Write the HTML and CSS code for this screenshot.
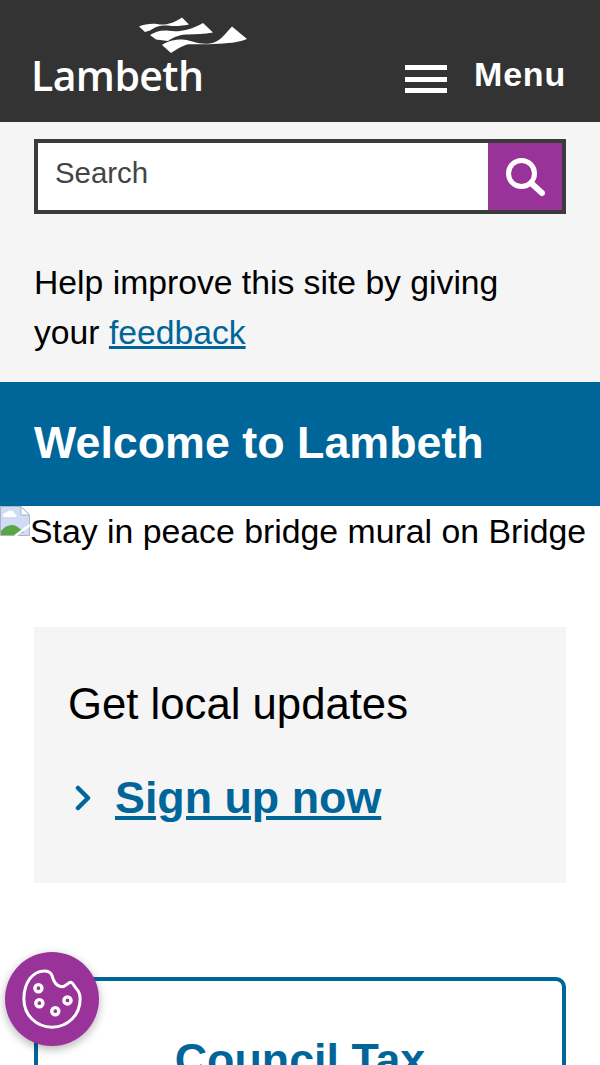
FILE: index.html
```html
<!DOCTYPE html>
<html lang="en">
<head>
<meta charset="utf-8">
<title>Lambeth</title>
<link rel="stylesheet" href="styles.css">
</head>
<body>
<header class="site-header">
  <a class="logo" href="#">
    <svg class="logo-mark" viewBox="0 0 110 37" aria-hidden="true">
      <path d="M1 9.500C6 7.500 12 6.500 19 7C27 8.500 34 7 44 .5L51 7.500C43 9 37 9.500 30 8.500C22 8 17 10 12 13.500L7 15Z"/>
      <path d="M12 18C17 15 22 13 29 13.500C38 15 49 15 65 6L75 15.500C66 17 58 17 50 17.500C43 17.500 37 19 30 24L18 22.500Z"/>
      <path d="M24 28C30 24 36 22.500 44 22.500C53 23 60 28 72 26.500C82 25 87 17 94 9.500L109 22C100 25.500 90 26.500 75 27C64 27.500 56 27 49 27.500C44 29 39 32 33 36Z"/>
    </svg>
    <span class="logo-text">Lambeth</span>
  </a>
  <button class="menu" type="button">
    <span class="burger"><i></i><i></i><i></i></span>
    <span class="menu-label">Menu</span>
  </button>
</header>

<section class="top">
  <form class="search">
    <span class="search-field">Search</span>
    <span class="search-btn">
      <svg viewBox="0 0 40 40" width="40" height="40" aria-hidden="true">
        <circle cx="16.500" cy="16.500" r="13" fill="none" stroke="#fff" stroke-width="5"/>
        <path d="M26 26L37 36" stroke="#fff" stroke-width="6" stroke-linecap="round"/>
      </svg>
    </span>
  </form>
  <p class="feedback">Help improve this site by giving your <a href="#">feedback</a></p>
</section>

<h1 class="welcome">Welcome to Lambeth</h1>

<div class="hero-alt">
  <svg class="broken" viewBox="0 0 30 30" aria-hidden="true">
    <path d="M.5 .5H21L29.500 9V29.500H.5Z" fill="#cfdcf3" stroke="#aab4c8"/>
    <path d="M21 .5V9H29.500Z" fill="#fff" stroke="#aab4c8"/>
    <path d="M3 11C2 8 5 6 7 6.500C9 3.500 14 4 15 8C17 8 17 11 15 11Z" fill="#fff"/>
    <path d="M1 29V25C4 21 8 19 12 19C17 19 20 23 24 26L18 29Z" fill="#5aa545"/>
    <path d="M15 30L30 19" stroke="#fff" stroke-width="2.500"/>
  </svg>
  <span>Stay in peace bridge mural on Bridge</span>
</div>

<section class="updates">
  <h2>Get local updates</h2>
  <p class="signup">
    <svg class="chev" viewBox="0 0 16 26" aria-hidden="true"><path d="M3 3L13 13L3 23" fill="none" stroke="#006699" stroke-width="4.500" stroke-linecap="round" stroke-linejoin="round"/></svg>
    <a href="#">Sign up now</a>
  </p>
</section>

<a class="card" href="#">Council Tax</a>

<button class="cookie" type="button" aria-label="Cookie settings">
  <svg viewBox="0 0 64 64" width="60" height="60" aria-hidden="true">
    <path d="M24 2C29 2 31 4 32 7C33 11 36 18 42 19C47 19 49 14 52 14C55 15 55 18 58 21C61 24 62 27 62 32C62 49 49 62 32 62C15 62 2 49 2 32C2 15 11 2 24 2Z" fill="none" stroke="#fff" stroke-width="3.200"/>
    <g fill="none" stroke="#fff" stroke-width="3.600">
      <circle cx="17.500" cy="20.500" r="3.800"/>
      <circle cx="18.500" cy="36.500" r="3.800"/>
      <circle cx="35.500" cy="45" r="3.800"/>
      <circle cx="48.500" cy="33.500" r="3.800"/>
    </g>
  </svg>
</button>
</body>
</html>
```

FILE: styles.css
```css
* { box-sizing: border-box; }

html, body {
  margin: 0;
  height: 1065px;
  overflow: hidden;
  background: #fff;
  font-family: "Liberation Sans", Arial, sans-serif;
  color: #000;
}

.site-header {
  height: 122px;
  background: #333;
  display: flex;
  justify-content: space-between;
  padding: 17px 34px 0 33px;
}

.logo {
  position: relative;
  display: block;
  width: 215px;
  color: #fff;
  text-decoration: none;
}

.logo-mark {
  position: absolute;
  left: 105px;
  top: 0;
  width: 110px;
  height: 37px;
  fill: #fff;
}

.logo-text {
  position: absolute;
  left: -2px;
  top: 30px;
  font-family: "Open Sans", sans-serif;
  font-size: 41px;
  line-height: 56px;
  font-weight: 600;
  letter-spacing: -.6px;
}

.menu {
  display: flex;
  align-items: flex-start;
  gap: 27px;
  padding: 0;
  border: 0;
  background: none;
  color: #fff;
  font: inherit;
  height: 78px;
}

.burger {
  display: flex;
  flex-direction: column;
  gap: 6.500px;
  width: 42px;
  margin-top: 48px;
}

.burger i {
  display: block;
  height: 5px;
  background: #fff;
}

.menu-label {
  font-size: 34px;
  line-height: 40px;
  font-weight: 700;
  margin-top: 37px;
  letter-spacing: .8px;
}

.top {
  background: #f5f5f5;
  height: 260px;
  padding: 17px 34px 0;
}

.search {
  display: flex;
  height: 75px;
  border: 4px solid #3b3b3b;
  background: #fff;
}

.search-field {
  flex: 1;
  padding-left: 17px;
  font-size: 29.400px;
  line-height: 60px;
  color: #444;
}

.search-btn {
  width: 74px;
  background: #993399;
  display: flex;
  align-items: center;
  justify-content: center;
}

.feedback {
  margin: 43px 0 0;
  font-size: 33.700px;
  line-height: 50px;
}

.feedback a {
  color: #006699;
}

.welcome {
  margin: 0;
  height: 124px;
  background: #006699;
  color: #fff;
  padding: 0 34px;
  font-size: 44.800px;
  line-height: 120px;
  font-weight: 700;
}

.hero-alt {
  display: flex;
  height: 121px;
  font-size: 33.800px;
  line-height: 50px;
  white-space: nowrap;
  overflow: hidden;
}

.broken {
  flex: none;
  width: 30px;
  height: 30px;
}

.updates {
  margin: 0 34px;
  height: 256px;
  background: #f5f5f5;
  padding: 49px 34px 0;
}

.updates h2 {
  margin: 0;
  font-size: 43.700px;
  line-height: 56px;
  font-weight: 400;
}

.signup {
  display: flex;
  align-items: center;
  gap: 24px;
  margin: 35px 0 0;
  padding-left: 7px;
  font-size: 44.800px;
  line-height: 60px;
  font-weight: 700;
}

.signup a {
  color: #006699;
}

.chev {
  width: 16px;
  height: 26px;
  margin-top: 2px;
}

.card {
  display: block;
  margin: 94px 34px 0;
  height: 200px;
  border: 4px solid #006699;
  border-radius: 10px;
  padding-top: 50px;
  text-align: center;
  color: #006699;
  font-size: 44.800px;
  line-height: 56px;
  font-weight: 700;
  text-decoration: none;
}

.cookie {
  position: fixed;
  left: 5px;
  top: 952px;
  width: 94px;
  height: 94px;
  padding: 0;
  border: 0;
  border-radius: 50%;
  background: #993399;
  box-shadow: 0 3px 10px rgba(0, 0, 0, .3);
  display: flex;
  align-items: center;
  justify-content: center;
}
```
